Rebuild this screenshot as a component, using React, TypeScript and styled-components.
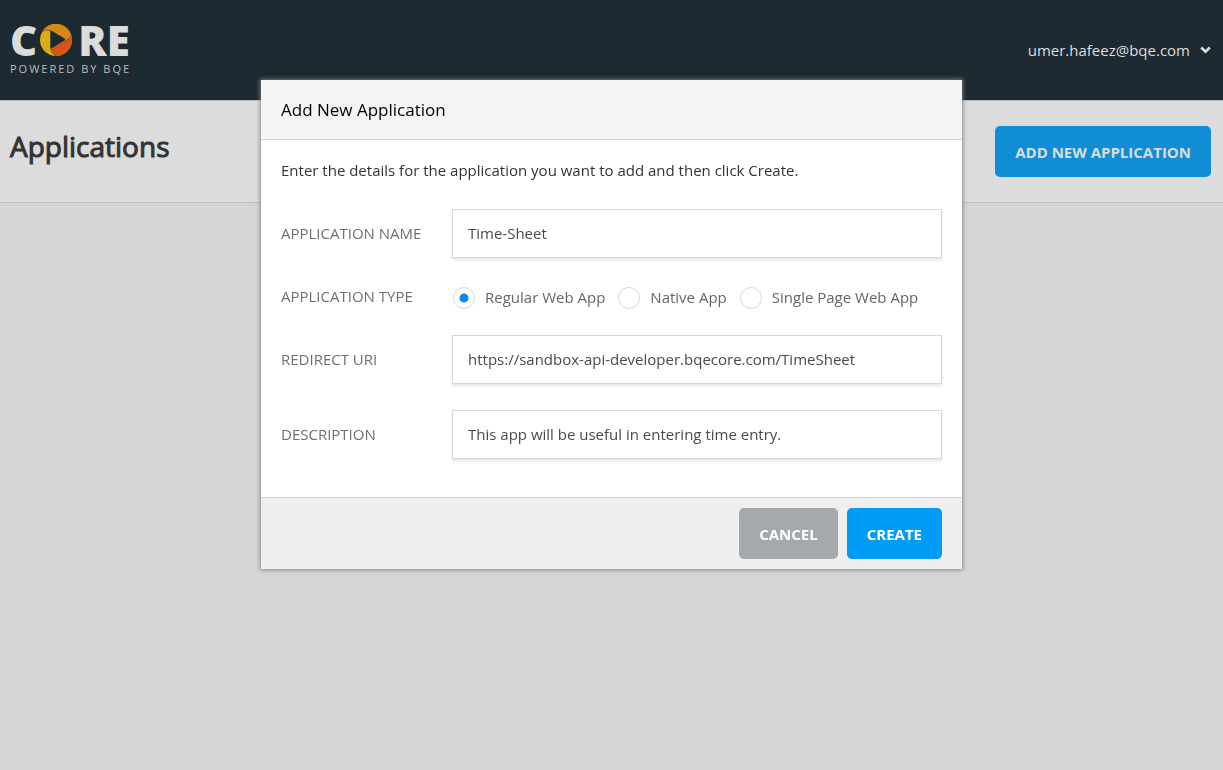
import React from "react";
import styled, { createGlobalStyle } from "styled-components";

const GlobalStyle = createGlobalStyle`
  *, *::before, *::after { box-sizing: border-box; }
  body {
    margin: 0;
    background: #d6d6d6;
    color: #333;
    font-family: "Open Sans", "Noto Sans", sans-serif;
    font-size: 15px;
    line-height: 20px;
  }
  button, input { font: inherit; }
`;

const TopBar = styled.header`
  display: flex;
  justify-content: space-between;
  align-items: center;
  height: 100px;
  padding: 0 12px 0 10px;
  background: #1e2a32;
`;

const Brand = styled.a`
  display: flex;
  flex-direction: column;
  color: #dcdcdc;
  text-decoration: none;
`;

const Wordmark = styled.span`
  display: flex;
  align-items: center;
  height: 38px;
  font-size: 42px;
  font-weight: 800;
  line-height: 38px;

  svg { margin: 0 6px 0 3px; }
`;

const Tagline = styled.span`
  font-size: 11px;
  line-height: 20px;
  letter-spacing: 2px;
  color: #b9bcbe;
`;

const AccountButton = styled.button`
  display: flex;
  align-items: center;
  gap: 10px;
  padding: 0;
  border: 0;
  background: none;
  color: #dcdcdc;
`;

const PageBar = styled.section`
  display: flex;
  justify-content: space-between;
  align-items: flex-start;
  height: 103px;
  padding: 25px 12px 0 10px;
  border-top: 1px solid #bdbdc0;
  border-bottom: 1px solid #bfbfb9;
  background: #dcdcdc;
`;

const PageTitle = styled.h1`
  margin: 0;
  font-size: 28px;
  font-weight: 400;
  line-height: 40px;
  -webkit-text-stroke: 1px currentColor;
`;

const tones = {
  dimmed: { background: "#118dd5", color: "#dcdcdc" },
  primary: { background: "#009cf7", color: "#fff" },
  neutral: { background: "#a5a8ad", color: "#fff" },
};

const Button = styled.button<{ $tone: keyof typeof tones }>`
  height: 51px;
  padding: 0 20px;
  border: 0;
  border-radius: 5px;
  font-weight: 700;
  background: ${(p) => tones[p.$tone].background};
  color: ${(p) => tones[p.$tone].color};
`;

const Overlay = styled.div`
  position: fixed;
  inset: 0;
  display: flex;
  justify-content: center;
  align-items: flex-start;
  padding-top: 80px;
  overflow: auto;
`;

const Dialog = styled.form`
  width: 701px;
  max-width: 100%;
  background: #fff;
  box-shadow: 0 0 4px 1px rgba(130, 130, 130, 0.9);
`;

const DialogHeader = styled.header`
  padding: 20px 20px 19px;
  border-bottom: 1px solid #d3d5d8;
  background: #f3f4f6;
`;

const DialogTitle = styled.h2`
  margin: 0;
  color: #000;
  font-size: 17px;
  font-weight: 400;
  line-height: 20px;
`;

const DialogBody = styled.div`
  display: flex;
  flex-direction: column;
  gap: 26px;
  padding: 20px 20px 38px;
`;

const Intro = styled.p`
  margin: 0 0 3px;
`;

const Row = styled.div`
  display: grid;
  grid-template-columns: 171px 1fr;
  align-items: center;
`;

const labelText = `
  padding-bottom: 1px;
  color: #6d6f73;
  text-transform: uppercase;
`;

const FieldLabel = styled.label`${labelText}`;
const GroupLabel = styled.span`${labelText}`;

const TextInput = styled.input`
  width: 100%;
  height: 49px;
  padding: 0 15px 1px;
  border: 1px solid #d3d8e0;
  border-radius: 0;
  background: #fff;
  color: #4a4a4a;
  box-shadow: 0 2px 3px rgba(0, 0, 0, 0.1);
  outline: 0;
`;

const RadioGroup = styled.div`
  display: flex;
  align-items: center;
  gap: 13px;
  height: 25px;
  padding-left: 1px;
`;

const RadioLabel = styled.label`
  display: flex;
  align-items: center;
  gap: 10px;
  color: #666;
  white-space: nowrap;
`;

const Radio = styled.input`
  appearance: none;
  width: 22px;
  height: 22px;
  margin: 2px 0 0;
  border: 1px solid #d3d8e0;
  border-radius: 50%;
  background: #fff;

  &:checked {
    background: radial-gradient(circle, #0f87ec 4px, #fff 5px);
  }
`;

const DialogFooter = styled.footer`
  display: flex;
  justify-content: flex-end;
  gap: 9px;
  padding: 10px 20px;
  border-top: 1px solid #d3d3d3;
  background: #efefef;
`;

const LogoRing = () => (
  <svg width="32" height="32" viewBox="0 0 32 32" aria-hidden="true">
    <circle cx="16" cy="16" r="16" fill="#d8ad16" />
    <path d="M2.300 7.500A16 16 0 0 1 31.400 11.500Q29 15.500 24.500 18L10.500 7Q6 5 2.300 7.500Z" fill="#d68914" />
    <path d="M31.400 11.500A16 16 0 0 1 16 32Q11.500 29.500 10.500 24L24.500 17Q29.500 15 31.400 11.500Z" fill="#d65516" />
    <path d="M2.300 7.500Q6 4.800 11 7M31.400 11.500Q29.500 15 24.500 17.500M16 32Q11 29.500 10.500 23" fill="none" stroke="#6b4a1c" strokeWidth="0.800" />
    <path d="M11.500 8L24 15.500L11.500 23Z" fill="#1e2a32" stroke="#1e2a32" strokeWidth="2.400" strokeLinejoin="round" />
  </svg>
);

const types = ["Regular Web App", "Native App", "Single Page Web App"];

export default function App() {
  return (
    <>
      <GlobalStyle />
      <TopBar>
        <Brand href="#" aria-label="CORE powered by BQE">
          <Wordmark>
            <span>C</span>
            <LogoRing />
            <span>RE</span>
          </Wordmark>
          <Tagline>POWERED BY BQE</Tagline>
        </Brand>
        <AccountButton type="button">
          umer.hafeez@bqe.com
          <svg width="11" height="8" viewBox="0 0 11 8" aria-hidden="true">
            <path d="M1.200 1.500L5.500 5.700L9.800 1.500" fill="none" stroke="currentColor" strokeWidth="2.600" />
          </svg>
        </AccountButton>
      </TopBar>
      <main>
        <PageBar>
          <PageTitle>Applications</PageTitle>
          <Button type="button" $tone="dimmed">ADD NEW APPLICATION</Button>
        </PageBar>
      </main>
      <Overlay>
        <Dialog role="dialog" aria-labelledby="dialog-title" onSubmit={(e) => e.preventDefault()}>
          <DialogHeader>
            <DialogTitle id="dialog-title">Add New Application</DialogTitle>
          </DialogHeader>
          <DialogBody>
            <Intro>Enter the details for the application you want to add and then click Create.</Intro>
            <Row>
              <FieldLabel htmlFor="name">Application Name</FieldLabel>
              <TextInput id="name" type="text" defaultValue="Time-Sheet" />
            </Row>
            <Row>
              <GroupLabel id="type-label">Application Type</GroupLabel>
              <RadioGroup role="radiogroup" aria-labelledby="type-label">
                {types.map((type, i) => (
                  <RadioLabel key={type}>
                    <Radio type="radio" name="type" value={type} defaultChecked={i === 0} />
                    {type}
                  </RadioLabel>
                ))}
              </RadioGroup>
            </Row>
            <Row>
              <FieldLabel htmlFor="uri">Redirect URI</FieldLabel>
              <TextInput id="uri" type="text" defaultValue="https://sandbox-api-developer.bqecore.com/TimeSheet" />
            </Row>
            <Row>
              <FieldLabel htmlFor="description">Description</FieldLabel>
              <TextInput id="description" type="text" defaultValue="This app will be useful in entering time entry." />
            </Row>
          </DialogBody>
          <DialogFooter>
            <Button type="button" $tone="neutral">CANCEL</Button>
            <Button type="submit" $tone="primary">CREATE</Button>
          </DialogFooter>
        </Dialog>
      </Overlay>
    </>
  );
}
